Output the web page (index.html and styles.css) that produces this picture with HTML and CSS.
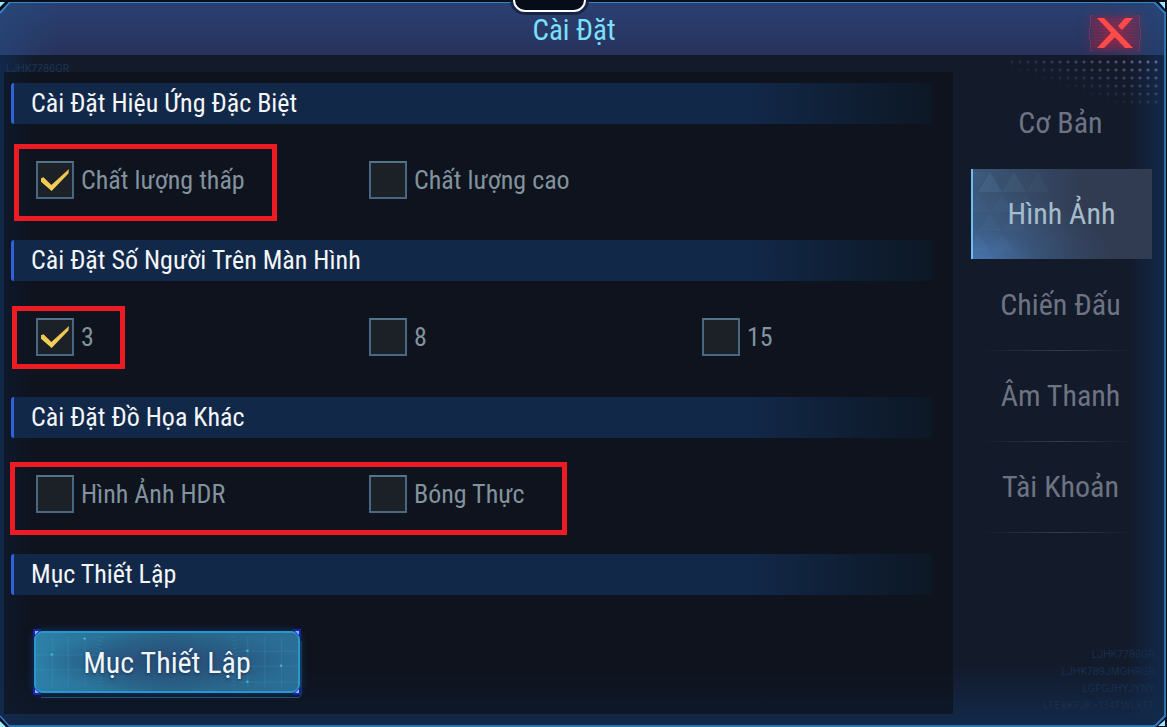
FILE: index.html
```html
<!DOCTYPE html>
<html lang="vi">
<head>
    <meta charset="UTF-8">
    <meta name="viewport" content="width=device-width, initial-scale=1.0">
    <title>Cài Đặt</title>
    <link rel="stylesheet" href="styles.css">
</head>
<body>
    <div class="window">
        <header class="title-bar">
            <span class="notch"></span>
            <h1>Cài Đặt</h1>
            <button class="close" type="button" aria-label="Đóng">
                <svg width="54" height="42" viewBox="0 0 54 42">
                    <path d="M3 4h48v35H3z" fill="#a01838" fill-opacity=".2"/>
                    <path d="M4 7.5h46M4 10.5h46M4 13.5h46M4 16.5h46M4 19.5h46M4 22.5h46M4 25.5h46M4 28.5h46M4 31.5h46M4 34.5h46" stroke="#c02a48" stroke-opacity=".18"/>
                    <path d="M5 3.5H2.5v11l-1 2v10l1 2V39H5M49 3.5h2.5v11l1 2v10l-1 2V39H49" fill="none" stroke="#a63a5c" stroke-opacity=".5"/>
                    <path d="M9 6h7l29 30h-8zM37 6h8L34 18l-4-4zM23 21l4 4-11 11H9z" fill="#ff4a4a"/>
                </svg>
            </button>
        </header>

        <div class="body">
            <div class="codes codes-left" aria-hidden="true">
                <span>LJHK7786GR</span>
            </div>
            <main class="panel">
                <section>
                    <h2>Cài Đặt Hiệu Ứng Đặc Biệt</h2>
                    <div class="options">
                        <label><input type="checkbox" checked>Chất lượng thấp</label>
                        <label><input type="checkbox">Chất lượng cao</label>
                        <span class="mark mark-quality"></span>
                    </div>
                </section>

                <section>
                    <h2>Cài Đặt Số Người Trên Màn Hình</h2>
                    <div class="options">
                        <label><input type="checkbox" checked>3</label>
                        <label><input type="checkbox">8</label>
                        <label><input type="checkbox">15</label>
                        <span class="mark mark-people"></span>
                    </div>
                </section>

                <section>
                    <h2>Cài Đặt Đồ Họa Khác</h2>
                    <div class="options">
                        <label><input type="checkbox">Hình Ảnh HDR</label>
                        <label><input type="checkbox">Bóng Thực</label>
                        <span class="mark mark-graphics"></span>
                    </div>
                </section>

                <section>
                    <h2>Mục Thiết Lập</h2>
                    <button class="setup" type="button">
                        <svg class="grid" viewBox="0 0 264 62" preserveAspectRatio="none">
                            <g fill="none" stroke="#45b9dd" stroke-opacity=".18">
                                <path d="M0 23.5h60M0 39.5h60M16.5 4v54M32.5 4v54M49.5 4v54M204 19.5h60M204 35.5h60M204 52.5h60M213.5 4v54M230.5 4v54M247.5 4v54"/>
                                <path d="M66 4q-8 27 0 54M198 4q8 27 0 54" stroke-width="5" stroke-dasharray="1 3"/>
                            </g>
                            <g fill="#3fb4d6">
                                <circle cx="16" cy="23" r="1.3"/><circle cx="49" cy="6" r="1.3"/>
                                <circle cx="213" cy="19" r="1.3"/><circle cx="247" cy="35" r="1.3"/><circle cx="213" cy="52" r="1.3"/>
                            </g>
                        </svg>
                        <span>Mục Thiết Lập</span>
                        <svg class="trim" width="276" height="74" viewBox="0 0 276 74">
                            <path d="M12 72.5h258l2-2V16" fill="none" stroke="#1d5478"/>
                            <g fill="#1822a8"><path d="M4 4h9l-9 9zM272 4h-9l9 9zM4 70h9l-9-9zM272 70h-9l9-9z"/></g>
                            <g fill="#8fb4ff"><path d="M6 6h4l-4 4zM270 6h-4l4 4zM6 68h4l-4-4zM270 68h-4l4-4z"/></g>
                        </svg>
                    </button>
                </section>
            </main>

            <aside>
                <div class="dots"></div>
                <nav>
                    <a href="#co-ban">Cơ Bản</a>
                    <a href="#hinh-anh" class="active" aria-current="page">
                        <svg class="triangles" width="110" height="90" viewBox="0 0 110 90">
                            <g fill="#6d9ac8">
                                <path d="M5 23 17 3l12 20z" fill-opacity=".16"/><path d="M29 23 41 3l12 20z" fill-opacity=".1"/><path d="M53 23 65 3l12 20z" fill-opacity=".05"/>
                                <path d="M-5 3H15L5 20z" fill-opacity=".06"/>
                                <path d="M17 43 29 25l12 18z" fill-opacity=".06"/><path d="M-7 43 5 25l12 18z" fill-opacity=".06"/><path d="M41 43 53 25l12 18z" fill-opacity=".04"/>
                                <path d="M5 62 17 45l12 17z" fill-opacity=".07"/><path d="M29 62 41 45l12 17z" fill-opacity=".05"/>
                                <path d="M17 82 29 65l12 17z" fill-opacity=".06"/><path d="M-7 82 5 65l12 17z" fill-opacity=".07"/>
                            </g>
                        </svg>
                        <span>Hình Ảnh</span>
                    </a>
                    <a href="#chien-dau">Chiến Đấu</a>
                    <a href="#am-thanh">Âm Thanh</a>
                    <a href="#tai-khoan">Tài Khoản</a>
                </nav>
                <div class="codes" aria-hidden="true">
                    <span>LJHK7786GR</span>
                    <span>LJHK789JMGHRGR</span>
                    <span>LGFGJHYJYNY</span>
                    <span>LFEKKFJK=134FWLKFE</span>
                </div>
            </aside>
        </div>

        <svg class="corner top-left" width="14" height="14" viewBox="0 0 14 14">
            <path d="M0 0h9L0 9z" fill="#06101c"/><path d="M0 0h5L0 5z" fill="#9be8ff"/><path d="M0 11 10 0" fill="none" stroke="#3f8fd0" stroke-width="1.5"/>
        </svg>
        <svg class="corner top-right" width="14" height="14" viewBox="0 0 14 14">
            <path d="M3 0h11v11z" fill="#06101c"/><path d="M7 0h6v7z" fill="#9be8ff"/><path d="M2 0 14 12" fill="none" stroke="#3478c4" stroke-width="2"/>
        </svg>
        <svg class="corner bottom-left" width="14" height="14" viewBox="0 0 14 14">
            <path d="M0 4v10h10z" fill="#06101c"/><path d="M0 8v6h6z" fill="#9be8ff"/><path d="M0 3 10 14" fill="none" stroke="#3478c4" stroke-width="1.5"/>
        </svg>
        <svg class="corner bottom-right" width="14" height="14" viewBox="0 0 14 14">
            <path d="M14 3v11H3z" fill="#06101c"/><path d="M13 7v6H6z" fill="#9be8ff"/><path d="M14 2 2 14" fill="none" stroke="#3478c4" stroke-width="2"/>
        </svg>
    </div>
</body>
</html>
```
FILE: styles.css
```css
* {
    box-sizing: border-box;
}

body {
    margin: 0;
    background-color: #07101d;
    font-family: 'Roboto Condensed', 'Liberation Sans Narrow', Roboto, sans-serif;
}

h1, h2 {
    margin: 0;
    font-weight: 400;
}

.window {
    position: relative;
    display: flex;
    flex-direction: column;
    min-height: calc(100vh - 2px);
    margin: 2px 1px 0 0;
    border: solid #2c73ad;
    border-width: 1px 2px 2px 0;
    border-top-color: #3a86b8;
}

/* title bar */
.title-bar {
    position: relative;
    z-index: 1;
    display: flex;
    align-items: center;
    justify-content: center;
    height: 52px;
    background: linear-gradient(90deg, rgba(36, 74, 124, .6), transparent 60px, transparent calc(100% - 60px), rgba(36, 74, 124, .5)),
        linear-gradient(#2a4072, #28325c);
}
.title-bar h1 {
    padding-top: 2px;
    margin-right: 16px;
    font-size: 29px;
    line-height: 36px;
    color: #7be0fb;
}
.notch {
    position: absolute;
    top: -6px;
    left: 50%;
    width: 73px;
    height: 15px;
    margin-left: -69px;
    border: 2px solid #fff;
    border-radius: 0 0 12px 12px;
    background-color: #060c18;
    box-shadow: 0 0 0 3px rgba(20, 30, 56, .8);
}
.close {
    position: absolute;
    top: 9px;
    right: 22px;
    padding: 0;
    border: none;
    background: none;
    cursor: pointer;
}
.close svg {
    display: block;
    filter: drop-shadow(0 0 6px rgba(255, 30, 50, .6));
}

/* window body */
.body {
    position: relative;
    flex: 1;
    display: flex;
    padding: 17px 0 11px 4px;
    background: linear-gradient(270deg, #12294a, transparent 36px),
        linear-gradient(90deg, #12294a, transparent 36px),
        linear-gradient(0deg, #12294a, transparent 60px),
        #131a2a;
}
.panel {
    position: relative;
    flex: 1;
    padding: 11px 21px 21px 7px;
    background-color: rgba(11, 15, 22, .6);
}
.panel h2 {
    height: 41px;
    padding-left: 17px;
    border-left: 3px solid #2e62dc;
    border-radius: 3px 0 0 3px;
    background: linear-gradient(90deg, #122849 80%, #0e1d30 93%, #0d1826);
    font-size: 26px;
    line-height: 41px;
    color: #f4f6f8;
}
.options {
    position: relative;
    display: grid;
    grid-template-columns: 333px 333px 1fr;
    height: 116px;
    padding: 37px 0 0 25px;
}
.options label {
    display: flex;
    align-items: center;
    gap: 7px;
    height: 38px;
    font-size: 26px;
    color: #82929e;
}
.options input {
    appearance: none;
    display: grid;
    place-items: center;
    width: 38px;
    height: 38px;
    margin: 0;
    border: 2px solid #486783;
    border-top-color: #527689;
    background-color: #1c2027;
}
.options input:checked::before {
    content: '';
    width: 28px;
    height: 22px;
    background: linear-gradient(#e8c052, #f8d257);
    clip-path: polygon(0 42%, 9% 38%, 37% 73%, 100% 0, 98% 20%, 38% 100%, 0 58%);
    filter: drop-shadow(0 0 1px #a86a1c);
}

/* red frames around the recommended options */
.mark {
    position: absolute;
    border: 5px solid #ed1c24;
    pointer-events: none;
}
.mark-quality {
    top: 20px;
    left: 3px;
    width: 263px;
    height: 77px;
}
.mark-people {
    top: 25px;
    left: 1px;
    width: 113px;
    height: 63px;
}
.mark-graphics {
    top: 24px;
    left: -1px;
    width: 557px;
    height: 73px;
}

.setup {
    position: relative;
    display: block;
    width: 266px;
    height: 62px;
    margin: 36px 0 0 23px;
    padding: 0;
    border: 2px solid #2798cb;
    border-radius: 8px;
    background: radial-gradient(closest-side, #28507b 20%, transparent 100%),
        linear-gradient(90deg, #2c80a8, #296487 50%, #2a6e96);
    box-shadow: 0 0 8px rgba(24, 90, 190, .5);
    font: inherit;
    font-size: 30px;
    color: #f0f7fb;
    text-shadow: 0 1px 3px #173450;
    cursor: pointer;
}
.setup .grid {
    position: absolute;
    inset: 0;
    width: 100%;
    height: 100%;
}
.setup span {
    position: relative;
}
.setup .trim {
    position: absolute;
    top: -8px;
    left: -7px;
}

/* tabs */
aside {
    position: relative;
    display: flex;
    flex: none;
    flex-direction: column;
    width: 211px;
    padding: 6px 12px 0 18px;
}
.dots {
    position: absolute;
    top: -14px;
    right: 4px;
    width: 150px;
    height: 50px;
    background: radial-gradient(circle, #6a6698 1px, transparent 2px) right top / 8px 8px;
    -webkit-mask-image: linear-gradient(to top right, transparent 35%, #000);
    mask-image: linear-gradient(to top right, transparent 35%, #000);
}
nav {
    position: relative;
    display: flex;
    flex-direction: column;
}
nav a {
    display: flex;
    align-items: center;
    justify-content: center;
    height: 91px;
    padding: 0 2px 2px 0;
    border-bottom: 1px solid;
    border-image: linear-gradient(90deg, transparent 5%, #353d4b 50%, transparent 90%) 1;
    font-size: 30px;
    color: #6d7383;
    text-decoration: none;
}
nav a:first-child {
    border-image: none;
    border-color: transparent;
}
nav a.active {
    position: relative;
    height: 90px;
    margin-bottom: 1px;
    border-left: 2px solid #6fbcf3;
    border-image: none;
    border-bottom: none;
    background: radial-gradient(ellipse at bottom left, #4673ac, rgba(62, 100, 148, .4) 25%, transparent 55%),
        linear-gradient(90deg, #3b5778, #313c53 60%);
    color: #a6bccb;
}
nav a.active span {
    position: relative;
}
.triangles {
    position: absolute;
    top: 0;
    left: 0;
}
.codes {
    display: flex;
    flex-direction: column;
    margin-top: auto;
    margin-right: -3px;
    text-align: right;
    font-family: Inter, sans-serif;
    font-size: 10px;
    line-height: 17px;
    color: #17304f;
}
.codes-left {
    position: absolute;
    top: 5px;
    left: 6px;
    color: #1a3657;
}

.corner {
    position: absolute;
    z-index: 2;
}
.top-left {
    top: -1px;
    left: 0;
}
.top-right {
    top: -1px;
    right: -2px;
}
.bottom-left {
    bottom: -2px;
    left: 0;
}
.bottom-right {
    right: -2px;
    bottom: -2px;
}
```
